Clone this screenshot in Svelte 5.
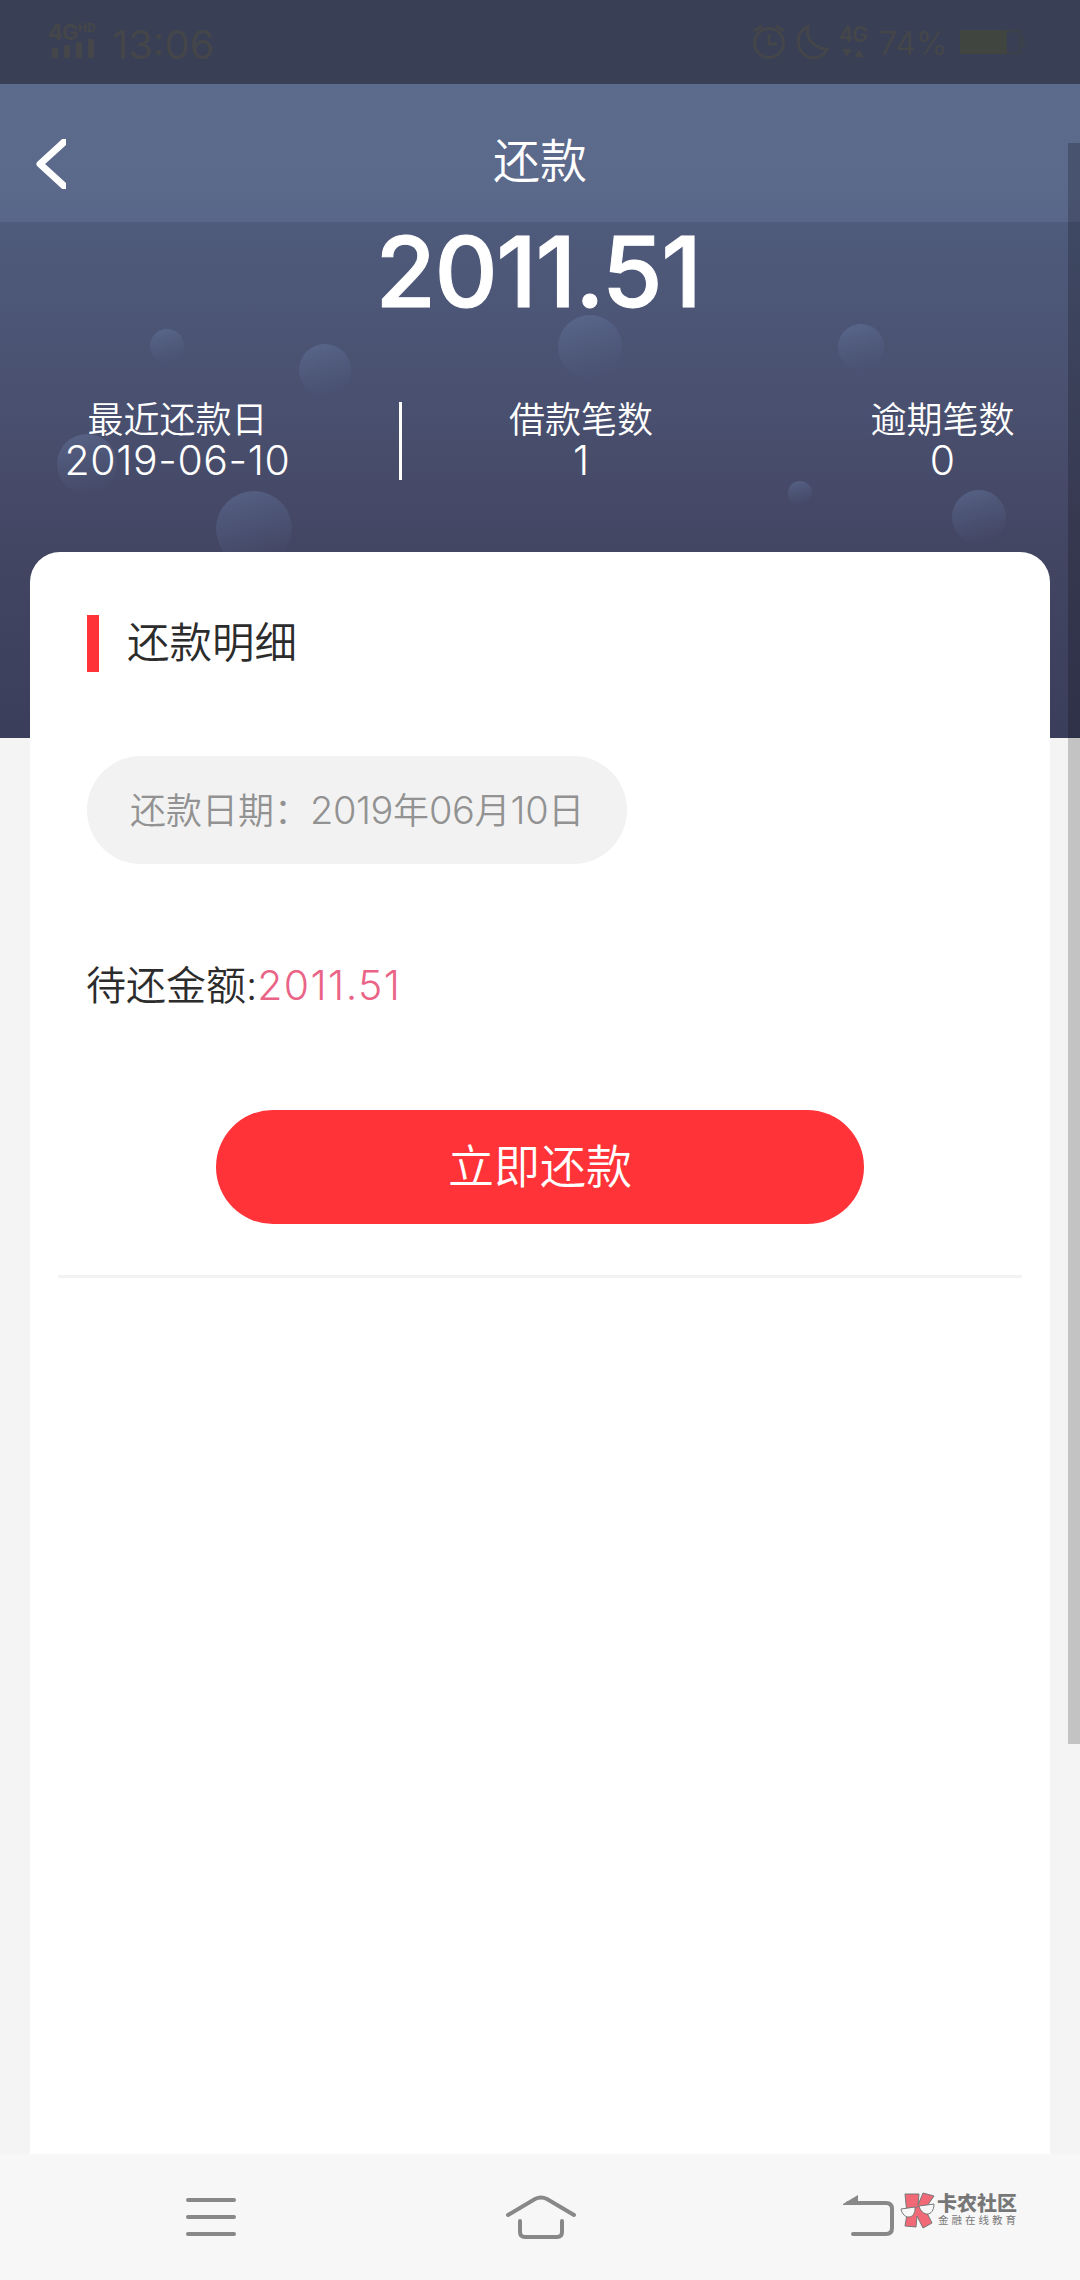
<script>
  const stats = [
    { label: '最近还款日', value: '2019-06-10', cls: 'first' },
    { label: '借款笔数', value: '1', cls: 'second' },
    { label: '逾期笔数', value: '0', cls: 'third' },
  ];
  const bubbles = [
    { x: 167, y: 346, r: 17 },
    { x: 325, y: 370, r: 26 },
    { x: 590, y: 347, r: 32 },
    { x: 861, y: 347, r: 23 },
    { x: 87, y: 464, r: 30 },
    { x: 254, y: 529, r: 38 },
    { x: 800, y: 493, r: 12 },
    { x: 979, y: 517, r: 27 },
  ];
</script>

<div class="screen">
  <header class="status">
    <div class="left">
      <svg class="signal" width="54" height="40" viewBox="0 0 54 40">
        <text x="0" y="18" class="net">4G</text>
        <text x="30" y="10" class="hd">HD</text>
        <path d="M4 26h6v10H4zM16 23h6v13h-6zM28 20h6v16h-6zM40 17h6v19h-6z" />
      </svg>
      <span class="time">13:06</span>
    </div>
    <div class="right">
      <svg class="line" width="36" height="38" viewBox="0 0 36 38">
        <circle cx="17" cy="21" r="14.5" />
        <path d="M17 12v10h8M2 9l8-5M32 9l-8-5" />
      </svg>
      <svg class="line moon" width="36" height="38" viewBox="0 0 36 38">
        <path d="M12 5C-1 9-1 29 12 35c8 3 16-1 19-8C19 26 9 18 12 5z" />
      </svg>
      <svg class="data" width="30" height="38" viewBox="0 0 30 38">
        <text x="0" y="20" class="net small">4G</text>
        <path d="M3 27h10l-5 8zM15 35h10l-5-8z" />
      </svg>
      <span class="percent">74%</span>
      <svg class="battery" width="72" height="28" viewBox="0 0 72 28">
        <path d="M3 2h47v24H3z" />
        <path class="rim" d="M50 3h13v22H50M66 9v10" />
      </svg>
    </div>
  </header>

  <section class="hero">
    <svg class="bubbles" width="1080" height="738" viewBox="0 0 1080 738">
      <defs>
        <linearGradient id="bubble" x1="0.3" y1="0" x2="0.6" y2="1">
          <stop offset="0" stop-color="#65769f" stop-opacity="0.5" />
          <stop offset="1" stop-color="#56678f" stop-opacity="0" />
        </linearGradient>
      </defs>
      {#each bubbles as b}
        <circle cx={b.x} cy={b.y} r={b.r} fill="url(#bubble)" />
      {/each}
    </svg>
    <nav class="bar">
      <svg class="back" width="32" height="50" viewBox="0 0 32 50">
        <path d="M30 3L6 25l24 22" />
      </svg>
      <h1>还款</h1>
    </nav>
    <div class="total">2011.51</div>
    <div class="stats">
      {#each stats as s}
        <div class="stat {s.cls}">
          <span class="label">{s.label}</span>
          <span class="value">{s.value}</span>
        </div>
      {/each}
    </div>
  </section>

  <main class="card">
    <div class="heading"><i></i><h2>还款明细</h2></div>
    <div class="date"><span>还款日期：</span><b>2019</b>年<b>06</b>月<b>10</b>日</div>
    <p class="due">待还金额:<b>2011.51</b></p>
    <button>立即还款</button>
    <hr />
  </main>

  <footer class="keys">
    <svg class="key menu" width="50" height="40" viewBox="0 0 50 40">
      <path d="M2 3h46M2 20h46M2 37h46" />
    </svg>
    <svg class="key home" width="70" height="44" viewBox="0 0 70 44">
      <path d="M2 20L29 4q6-3 12 0l27 16M14 26v11q0 5 5 5h32q5 0 5-5V26" />
    </svg>
    <svg class="key return" width="52" height="42" viewBox="0 0 52 42">
      <path d="M5 8h38q6 0 6 6v19q0 6-6 6H10" />
      <path class="tip" d="M0 9L15 0v10H0z" />
    </svg>
    <div class="brand">
      <svg width="36" height="36" viewBox="0 0 36 36">
        <path class="k" d="M5 2h14l-1 11 5-12 11 3-9 13 7 14-9 5-6-12-1 11-11-1 2-12z" />
        <path class="lens" d="M1 17l14-2c1 13-12 13-14 2zM19 14l15-2c0 13-12 13-15 2zM15 16l4-2" />
      </svg>
      <div class="words">
        <strong>卡农社区</strong>
        <small>金融在线教育</small>
      </div>
    </div>
  </footer>

  <div class="scroll"></div>
</div>

<style>
  :global(body) {
    margin: 0;
    background: #f4f4f4;
  }
  .screen {
    position: relative;
    width: 1080px;
    height: 2280px;
    overflow: hidden;
    background: #f4f4f4;
    color: #2c2c2c;
    font-family: Inter, 'Noto Sans CJK SC', sans-serif;
    font-weight: 350;
    display: flex;
    flex-direction: column;
  }
  svg {
    display: block;
    flex: none;
    overflow: visible;
  }
  .status {
    height: 84px;
    flex: none;
    background: #393f55;
    color: #444649;
    display: flex;
    justify-content: space-between;
    box-sizing: border-box;
    padding: 22px 51px 0 48px;
    position: relative;
    z-index: 1;
  }
  .status svg {
    fill: #444649;
  }
  .status .line {
    fill: none;
    stroke: #444649;
    stroke-width: 3;
  }
  .left,
  .right {
    display: flex;
    align-items: flex-start;
  }
  .net {
    font: 700 22px Inter;
    letter-spacing: -1px;
  }
  .small {
    font-size: 21px;
  }
  .hd {
    font: 800 12px Inter;
  }
  .time {
    font-size: 40px;
    font-weight: 400;
    line-height: 46px;
    margin-left: 10px;
  }
  .moon {
    margin-left: 8px;
  }
  .data {
    margin-left: 7px;
  }
  .percent {
    font-size: 32px;
    font-weight: 400;
    line-height: 43px;
    width: 72px;
    margin-left: 10px;
  }
  .battery {
    margin: 6px 0 0 6px;
  }
  .status .battery {
    fill: #414540;
  }
  .status .rim {
    fill: none;
    stroke: #3c424c;
    stroke-width: 3;
  }
  .hero {
    height: 738px;
    flex: none;
    margin-top: -84px;
    box-sizing: border-box;
    padding-top: 84px;
    background: linear-gradient(#4f5b7c 222px, #494f6e 420px, #434663 545px, #3a3e5b 738px);
    color: #fff;
    position: relative;
  }
  .bubbles {
    position: absolute;
    inset: 0;
  }
  .bar {
    position: relative;
    height: 138px;
    background: linear-gradient(#5c6a8c, #5b698b 70%, #596689);
    display: flex;
    align-items: center;
    justify-content: center;
    box-sizing: border-box;
    padding-top: 16px;
  }
  .back {
    position: absolute;
    left: 34px;
    top: 55px;
    fill: none;
    stroke: #fff;
    stroke-width: 7;
    stroke-linejoin: round;
    stroke-linecap: round;
    overflow: hidden;
  }
  h1 {
    margin: 0;
    font-size: 47px;
    line-height: 70px;
    font-weight: 350;
  }
  .total {
    position: relative;
    height: 100px;
    line-height: 100px;
    padding-right: 4px;
    text-align: center;
    font-size: 98px;
    font-weight: 500;
    letter-spacing: -1.4px;
    -webkit-text-stroke: 1px #fff;
  }
  .stats {
    position: relative;
    display: grid;
    grid-template-columns: 402px 358px 320px;
    margin-top: 80px;
  }
  .stat {
    height: 78px;
    display: flex;
    flex-direction: column;
    align-items: center;
    box-sizing: border-box;
  }
  .first {
    padding-right: 44px;
    border-right: 3px solid #fff;
  }
  .third {
    padding-left: 45px;
  }
  .label {
    font-size: 36px;
    line-height: 37px;
  }
  .value {
    font-size: 41px;
    line-height: 43px;
  }
  .first .value {
    letter-spacing: 0.6px;
  }
  .card {
    position: relative;
    margin: -186px 30px 0;
    height: 1602px;
    flex: none;
    box-sizing: border-box;
    padding: 63px 28px 0;
    background: #fff;
    border-radius: 30px 30px 0 0;
  }
  .heading {
    height: 57px;
    margin-left: 29px;
    display: flex;
    align-items: center;
    gap: 28px;
  }
  .heading i {
    width: 12px;
    height: 57px;
    background: #ff3338;
  }
  h2 {
    margin: 0;
    font-size: 42.5px;
    line-height: 56px;
    height: 57px;
    font-weight: 350;
  }
  b {
    font-weight: 300;
  }
  .date {
    box-sizing: border-box;
    width: 540px;
    height: 108px;
    margin: 84px 0 0 29px;
    padding-left: 43px;
    border-radius: 54px;
    background: #f2f2f2;
    color: #929292;
    font-size: 36px;
    line-height: 108px;
    white-space: nowrap;
  }
  .date b {
    font-size: 38px;
    letter-spacing: -0.4px;
  }
  .due {
    height: 60px;
    margin: 92px 0 0 28px;
    font-size: 40px;
    line-height: 59px;
    white-space: nowrap;
  }
  .due b {
    color: #ea6487;
    font-size: 41px;
    letter-spacing: 1.4px;
  }
  button {
    display: block;
    margin: 94px auto 0;
    width: 648px;
    height: 114px;
    border: 0;
    padding: 0 0 8px;
    border-radius: 57px;
    background: #ff3338;
    color: #fff;
    font: inherit;
    font-size: 46px;
  }
  hr {
    margin: 51px 0 0;
    border: 0;
    height: 3px;
    background: #f2f2f2;
  }
  .keys {
    height: 126px;
    flex: none;
    background: #f7f7f7;
    display: flex;
    align-items: flex-start;
  }
  .key {
    fill: none;
    stroke: #888;
    stroke-width: 4;
    stroke-linecap: round;
  }
  .menu {
    margin: 43px 0 0 186px;
  }
  .home {
    margin: 41px 0 0 270px;
  }
  .return {
    margin: 41px 0 0 267px;
  }
  .tip {
    fill: #888;
    stroke: none;
  }
  .brand {
    display: flex;
    margin: 38px 0 0 5px;
    gap: 1px;
  }
  .k {
    fill: #f16876;
    stroke: #777;
    stroke-width: 1;
  }
  .lens {
    fill: #f7f7f7;
    stroke: #777;
    stroke-width: 1;
  }
  .words {
    display: flex;
    flex-direction: column;
    color: #777;
    white-space: nowrap;
    padding-top: 1px;
  }
  strong {
    font-size: 20px;
    line-height: 22px;
    font-weight: 900;
  }
  small {
    font-size: 10.5px;
    line-height: 12px;
    letter-spacing: 3px;
    font-weight: 400;
    margin-left: 1px;
  }
  .scroll {
    position: absolute;
    z-index: 2;
    left: 1068px;
    top: 143px;
    width: 12px;
    height: 1601px;
    background: rgba(0, 0, 0, 0.2);
  }
</style>
